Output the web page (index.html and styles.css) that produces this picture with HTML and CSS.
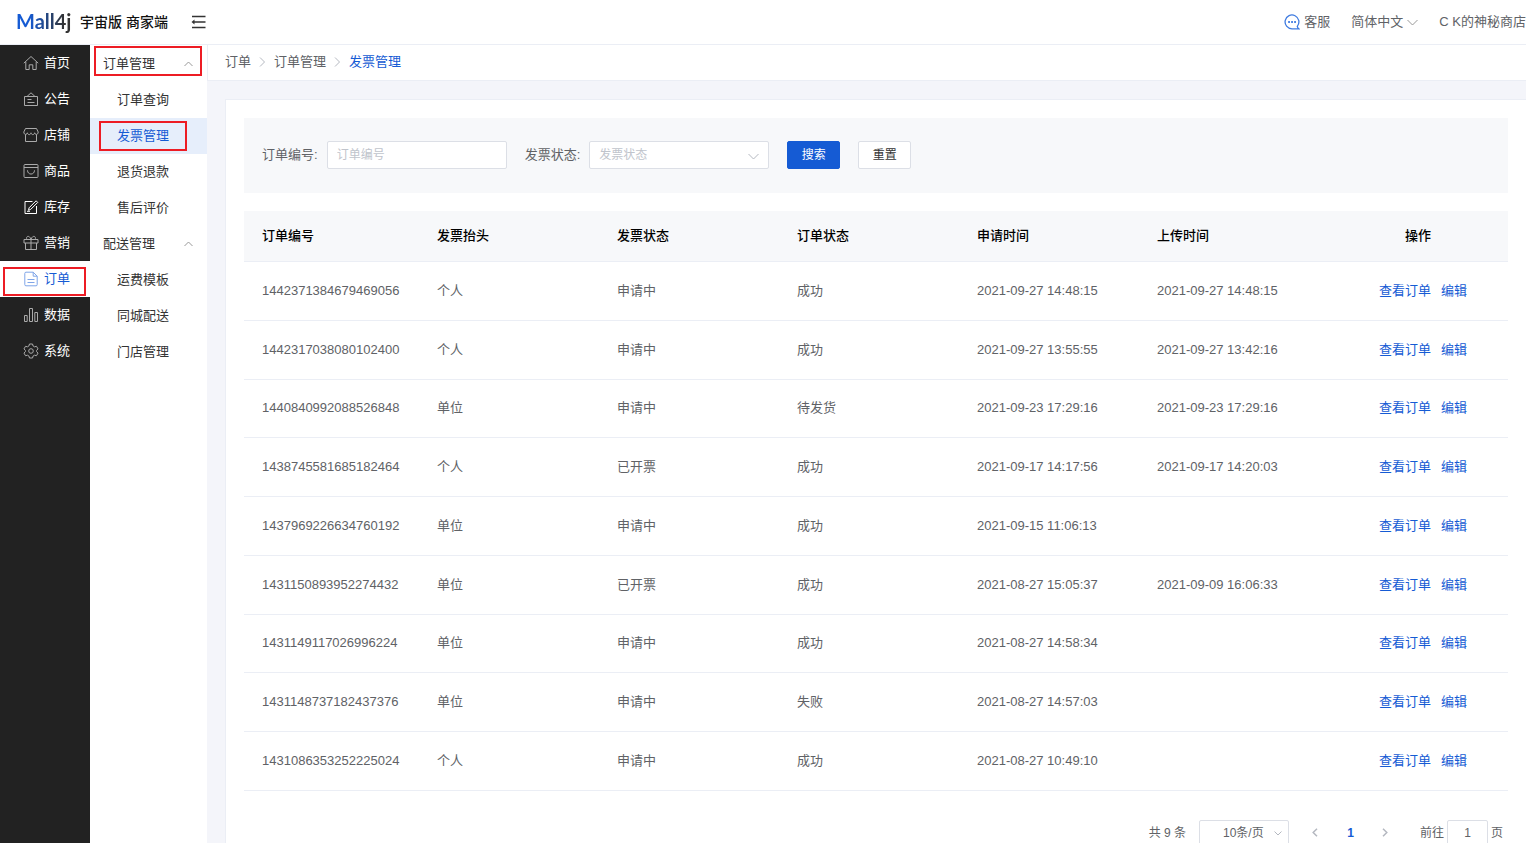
FILE: index.html
```html
<!DOCTYPE html>
<html lang="zh-CN">
<head>
  <meta charset="UTF-8" />
  <meta name="viewport" content="width=device-width, initial-scale=1.0"/>
  <title>发票管理</title>
  <link rel="stylesheet" href="styles.css">
</head>
<body>

  <div class="app">
    <header class="header">
      <span class="logo">Mall4j</span>
      <span class="title">宇宙版 商家端</span>
      <button class="fold" aria-label="收起菜单">
        <svg width="15" height="14" viewBox="0 0 15 14" fill="none" stroke="#333" stroke-width="1.3">
          <path d="M1 1.500h13.500M3 7h11.500M1 12.500h13.500"/>
          <path d="M3.500 4.500v5L.5 7z" fill="#333" stroke="none"/>
        </svg>
      </button>
      <div class="header-right">
        <a href="#" class="service">
          <svg width="16" height="16" viewBox="0 0 16 16" fill="none" stroke="#3f7be0" stroke-width="1.3">
            <path d="M14.800 14.800H8A6.900 6.900 0 1 1 13.300 12.300q.2 1.500 1.500 2.500z"/>
            <path d="M4.200 8h1.700M7.200 8h1.700M10.200 8h1.700" stroke-width="1.800"/>
          </svg>
          客服
        </a>
        <button class="lang">
          简体中文
          <svg width="11" height="7" viewBox="0 0 11 7" fill="none" stroke="#999"><path d="M.5 1l5 5 5-5"/></svg>
        </button>
        <a href="#" class="store">C K的神秘商店</a>
      </div>
    </header>

    <div class="body">
      <nav class="sidebar">
        <a href="#">
          <svg viewBox="0 0 16 16"><path d="M.8 8.200L8 1.500l7.200 6.700M2.800 6.800v7.700h3.400V9.800h3.600v4.700h3.400V6.800"/></svg>
          首页
        </a>
        <a href="#">
          <svg viewBox="0 0 16 16"><path d="M1.500 5.500h13v9h-13zM4 5.500l4-3.700 4 3.700M4.500 8.500h4M4.500 11.500h7"/></svg>
          公告
        </a>
        <a href="#">
          <svg viewBox="0 0 16 16"><path d="M2.500 1.500h11L15.200 5c0 3-3.200 3.200-3.600.8-.4 2.400-3.200 2.400-3.600 0-.4 2.400-3.200 2.400-3.600 0C4 8.200.8 8 .8 5zM2.500 7.500v7h11v-7"/></svg>
          店铺
        </a>
        <a href="#">
          <svg viewBox="0 0 16 16"><rect x="1" y="1.500" width="14" height="13" rx="1"/><path d="M1 4.500h14M4.500 7.300c0 5 7 5 7 0"/></svg>
          商品
        </a>
        <a href="#" class="bright">
          <svg viewBox="0 0 16 16"><path d="M9.500 2.500H2v12h11.500V7M5.500 11.300l.6-2.500 7-7 1.600 1.600-7 7zM4 12.300h3"/></svg>
          库存
        </a>
        <a href="#">
          <svg viewBox="0 0 16 16"><path d="M1 4.500h14v3.500H1zM2.500 8v6.500h11V8M8 4.500v10M8 4.500C6.800 0 2.500.6 3.800 4.500M8 4.500C9.200 0 13.500.6 12.200 4.500"/></svg>
          营销
        </a>
        <a href="#" class="active marked">
          <svg viewBox="0 0 16 16"><path d="M10.200 1.200H3a1.200 1.200 0 0 0-1.200 1.200v11.200A1.200 1.200 0 0 0 3 14.800h10a1.200 1.200 0 0 0 1.200-1.200V5.200zM10.200 1.200v4h4M4.500 8.500h7M4.500 11.500h7"/></svg>
          订单
        </a>
        <a href="#">
          <svg viewBox="0 0 16 16"><path d="M1.500 8.500h2.700v6H1.500zM6.500 1.500h3v13h-3zM11.800 5.500h2.700v9h-2.700z"/></svg>
          数据
        </a>
        <a href="#">
          <svg viewBox="0 0 16 16"><path d="M6.500 1h3l.6 2 1.400.8 2-.5 1.500 2.600L13.600 7.400v1.200l1.400 1.500-1.500 2.600-2-.5-1.400.8-.6 2h-3l-.6-2-1.400-.8-2 .5L1 10.100l1.400-1.500V7.400L1 5.900l1.500-2.600 2 .5L5.900 3z"/><circle cx="8" cy="8" r="2.300"/></svg>
          系统
        </a>
      </nav>

      <nav class="submenu">
        <button class="group marked">
          订单管理
          <svg width="9" height="6" viewBox="0 0 9 6" fill="none" stroke="#999"><path d="M.5 5l4-4 4 4"/></svg>
        </button>
        <a href="#">订单查询</a>
        <a href="#" class="active marked">发票管理</a>
        <a href="#">退货退款</a>
        <a href="#">售后评价</a>
        <button class="group">
          配送管理
          <svg width="9" height="6" viewBox="0 0 9 6" fill="none" stroke="#999"><path d="M.5 5l4-4 4 4"/></svg>
        </button>
        <a href="#">运费模板</a>
        <a href="#">同城配送</a>
        <a href="#">门店管理</a>
      </nav>

      <main class="main">
        <div class="breadcrumb">
          <a href="#">订单</a>
          <svg width="7" height="10" viewBox="0 0 7 10" fill="none" stroke="#b4b8c0"><path d="M1 .5L5.500 5 1 9.500"/></svg>
          <a href="#">订单管理</a>
          <svg width="7" height="10" viewBox="0 0 7 10" fill="none" stroke="#b4b8c0"><path d="M1 .5L5.500 5 1 9.500"/></svg>
          <a href="#" class="current">发票管理</a>
        </div>

        <div class="card">
          <form class="search">
            <div class="field">
              <label for="order-no">订单编号:</label>
              <input type="text" id="order-no" placeholder="订单编号">
            </div>
            <div class="field">
              <label for="status">发票状态:</label>
              <div class="select">
                <select id="status">
                  <option value="">发票状态</option>
                </select>
                <svg width="11" height="7" viewBox="0 0 11 7" fill="none" stroke="#b4b8c0"><path d="M.5 1l5 5 5-5"/></svg>
              </div>
            </div>
            <button type="button" class="btn primary">搜索</button>
            <button type="reset" class="btn">重置</button>
          </form>

          <table class="table">
            <colgroup>
              <col>
              <col class="col"><col class="col"><col class="col">
              <col class="col"><col class="col"><col class="col">
            </colgroup>
            <thead>
              <tr>
                <th>订单编号</th>
                <th>发票抬头</th>
                <th>发票状态</th>
                <th>订单状态</th>
                <th>申请时间</th>
                <th>上传时间</th>
                <th class="ops">操作</th>
              </tr>
            </thead>
            <tbody>
              <tr>
                <td>1442371384679469056</td><td>个人</td><td>申请中</td><td>成功</td>
                <td>2021-09-27 14:48:15</td><td>2021-09-27 14:48:15</td>
                <td class="ops"><a href="#">查看订单</a><a href="#">编辑</a></td>
              </tr>
              <tr>
                <td>1442317038080102400</td><td>个人</td><td>申请中</td><td>成功</td>
                <td>2021-09-27 13:55:55</td><td>2021-09-27 13:42:16</td>
                <td class="ops"><a href="#">查看订单</a><a href="#">编辑</a></td>
              </tr>
              <tr>
                <td>1440840992088526848</td><td>单位</td><td>申请中</td><td>待发货</td>
                <td>2021-09-23 17:29:16</td><td>2021-09-23 17:29:16</td>
                <td class="ops"><a href="#">查看订单</a><a href="#">编辑</a></td>
              </tr>
              <tr>
                <td>1438745581685182464</td><td>个人</td><td>已开票</td><td>成功</td>
                <td>2021-09-17 14:17:56</td><td>2021-09-17 14:20:03</td>
                <td class="ops"><a href="#">查看订单</a><a href="#">编辑</a></td>
              </tr>
              <tr>
                <td>1437969226634760192</td><td>单位</td><td>申请中</td><td>成功</td>
                <td>2021-09-15 11:06:13</td><td></td>
                <td class="ops"><a href="#">查看订单</a><a href="#">编辑</a></td>
              </tr>
              <tr>
                <td>1431150893952274432</td><td>单位</td><td>已开票</td><td>成功</td>
                <td>2021-08-27 15:05:37</td><td>2021-09-09 16:06:33</td>
                <td class="ops"><a href="#">查看订单</a><a href="#">编辑</a></td>
              </tr>
              <tr>
                <td>1431149117026996224</td><td>单位</td><td>申请中</td><td>成功</td>
                <td>2021-08-27 14:58:34</td><td></td>
                <td class="ops"><a href="#">查看订单</a><a href="#">编辑</a></td>
              </tr>
              <tr>
                <td>1431148737182437376</td><td>单位</td><td>申请中</td><td>失败</td>
                <td>2021-08-27 14:57:03</td><td></td>
                <td class="ops"><a href="#">查看订单</a><a href="#">编辑</a></td>
              </tr>
              <tr>
                <td>1431086353252225024</td><td>个人</td><td>申请中</td><td>成功</td>
                <td>2021-08-27 10:49:10</td><td></td>
                <td class="ops"><a href="#">查看订单</a><a href="#">编辑</a></td>
              </tr>
            </tbody>
          </table>

          <div class="pagination">
            <span>共 9 条</span>
            <div class="select page-size">
              <select aria-label="每页条数">
                <option>10条/页</option>
              </select>
              <svg width="8" height="5" viewBox="0 0 8 5" fill="none" stroke="#b4b8c0"><path d="M.5 .5L4 4 7.500 .5"/></svg>
            </div>
            <div class="pager">
              <button aria-label="上一页">
                <svg width="6" height="9" viewBox="0 0 6 9" fill="none" stroke="#b4b8c0" stroke-width="1.500"><path d="M5 .8L1.200 4.500 5 8.200"/></svg>
              </button>
              <button class="current">1</button>
              <button aria-label="下一页">
                <svg width="6" height="9" viewBox="0 0 6 9" fill="none" stroke="#b4b8c0" stroke-width="1.500"><path d="M1 .8l3.800 3.700L1 8.200"/></svg>
              </button>
            </div>
            <div class="jump">
              <label for="page">前往</label>
              <input type="text" id="page" value="1">
              <span>页</span>
            </div>
          </div>
        </div>
      </main>
    </div>
  </div>

</body>
</html>
```
FILE: styles.css
```css
:root {
  --primary: #155bd4;
  --text: #606266;
  --dark: #333;
  --border: #dcdfe6;
  --line: #ebeef5;
  --bg: #f4f5fa;
  --panel: #f7f8fa;
  --mark: #ed1c24;
}

* {
  box-sizing: border-box;
}

body {
  margin: 0;
  font-family: "Liberation Sans", "Noto Sans CJK SC", sans-serif;
  font-size: 13px;
  line-height: 18px;
  color: var(--text);
}

a {
  color: inherit;
  text-decoration: none;
}

button,
input,
select {
  font: inherit;
  color: inherit;
}

button {
  padding: 0;
  border: none;
  background: none;
  cursor: pointer;
}

.app {
  display: flex;
  flex-direction: column;
  height: 100vh;
  overflow: hidden;
}

/* header */
.header {
  display: flex;
  align-items: center;
  flex-shrink: 0;
  height: 45px;
  padding-left: 16px;
  background: #fff;
  border-bottom: 1px solid var(--line);
  white-space: nowrap;
}

.logo {
  width: 64px;
  padding-bottom: 2px;
  font-family: Lato, sans-serif;
  font-size: 20px;
  font-weight: 700;
  line-height: 24px;
  background: linear-gradient(90deg, #155bd4 20%, #333 75%);
  -webkit-background-clip: text;
  background-clip: text;
  color: transparent;
}

.title {
  width: 111px;
  font-size: 14px;
  font-weight: 500;
  color: #111;
}

.fold {
  display: flex;
}

.header-right {
  display: flex;
  align-items: center;
  gap: 21px;
  margin-left: auto;
}

.service,
.lang {
  display: flex;
  align-items: center;
  gap: 4px;
}

.body {
  display: flex;
  flex: 1;
  min-height: 0;
}

/* left menus */
.sidebar {
  flex: 0 0 90px;
  background: #222;
  color: #fff;
}

.sidebar a {
  position: relative;
  display: flex;
  align-items: center;
  gap: 5px;
  height: 36px;
  padding-left: 23px;
}

.sidebar svg {
  width: 16px;
  height: 16px;
  fill: none;
  stroke: #aaa;
}

.sidebar .bright svg {
  stroke: #fff;
}

.sidebar .active {
  background: #fff;
  color: var(--primary);
}

.sidebar .active svg {
  stroke: #7fa5e8;
}

.submenu {
  flex: 0 0 117px;
  padding-top: 1px;
  background: #fff;
  color: var(--dark);
}

.submenu a,
.group {
  position: relative;
  display: flex;
  align-items: center;
  width: 100%;
  height: 36px;
  padding-left: 27px;
}

.submenu .group {
  justify-content: space-between;
  padding: 0 14px 0 13px;
}

.submenu .active {
  background: #e6eefb;
  color: var(--primary);
}

/* red frames over the highlighted menu entries */
.marked::after {
  content: "";
  position: absolute;
  border: 2px solid var(--mark);
}

.sidebar .marked::after {
  inset: 6px 4px 1px 3px;
}

.group.marked::after {
  inset: 0 5px 6px 4px;
}

.submenu a.marked::after {
  inset: 3px 20px 3px 9px;
}

/* content */
.main {
  flex: 1;
  min-width: 0;
  background: var(--bg);
}

.breadcrumb {
  display: flex;
  align-items: center;
  gap: 8px;
  height: 36px;
  padding: 0 17px 2px;
  background: #fff;
  border-bottom: 1px solid var(--line);
  border-left: 1px solid var(--line);
}

.breadcrumb .current {
  color: var(--primary);
}

.card {
  min-height: 100%;
  margin: 18px 0 0 18px;
  padding: 18px;
  background: #fff;
  border: 1px solid var(--line);
  border-right: none;
}

.search {
  display: flex;
  align-items: center;
  gap: 18px;
  height: 75px;
  margin-bottom: 18px;
  padding: 0 18px 2px;
  background: var(--panel);
}

.field {
  display: flex;
  align-items: center;
  gap: 9px;
}

.field input,
.select select {
  display: block;
  width: 180px;
  height: 28px;
  padding: 0 9px;
  font-size: 12px;
  background: #fff;
  border: 1px solid var(--border);
  border-radius: 2px;
}

.field input::placeholder,
.field select {
  color: #c0c4cc;
}

.select {
  position: relative;
}

.select select {
  appearance: none;
}

.select svg {
  position: absolute;
  top: 50%;
  right: 10px;
  margin-top: -2px;
  pointer-events: none;
}

.btn {
  width: 53px;
  height: 28px;
  font-size: 12px;
  color: var(--dark);
  background: #fff;
  border: 1px solid var(--border);
  border-radius: 2px;
}

.btn.primary {
  color: #fff;
  background: var(--primary);
  border-color: var(--primary);
}

/* table */
.table {
  width: 100%;
  height: 580px;
  table-layout: fixed;
  border-collapse: separate;
  border-spacing: 0;
}

.col {
  width: 180px;
}

.table th,
.table td {
  padding: 0 9px;
  text-align: left;
  border-bottom: 1px solid var(--line);
}

.table th {
  height: 51px;
  font-weight: 500;
  color: #000;
  background: var(--panel);
}

.table th:first-child,
.table td:first-child {
  padding-left: 18px;
}

.table .ops {
  text-align: center;
}

.ops a {
  margin-left: 10px;
  color: var(--primary);
}

/* pagination */
.pagination {
  display: flex;
  align-items: center;
  justify-content: flex-end;
  margin-top: 29px;
  padding-right: 5px;
  font-size: 12px;
}

.page-size {
  margin-left: 13px;
}

.page-size select {
  width: 90px;
  height: 25px;
  padding-left: 23px;
}

.page-size svg {
  right: 7px;
}

.pager {
  display: flex;
  margin: 0 17px 0 9px;
}

.pager button {
  width: 35px;
  height: 25px;
}

.pager .current {
  font-weight: 700;
  color: var(--primary);
}

.jump {
  display: flex;
  align-items: center;
  gap: 3px;
}

.jump input {
  width: 41px;
  height: 25px;
  padding: 0;
  text-align: center;
  border: 1px solid var(--border);
  border-radius: 2px;
}
```
